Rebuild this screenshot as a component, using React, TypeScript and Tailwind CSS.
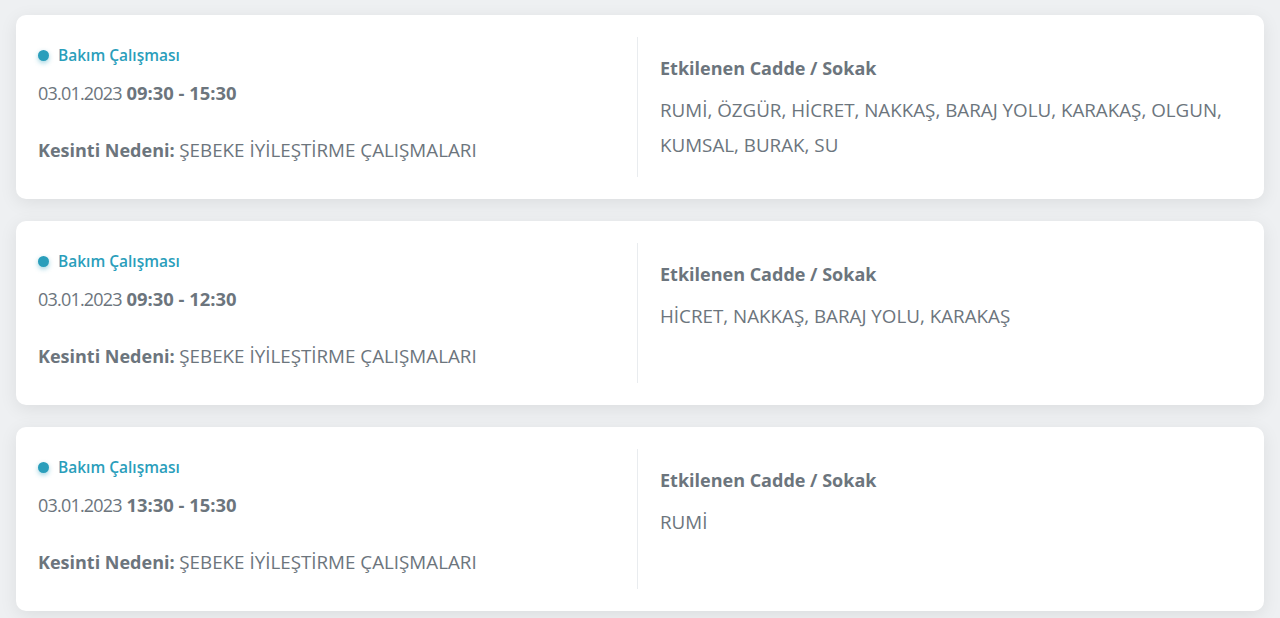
const items = [
  {
    time: "09:30 - 15:30",
    streets: "RUMİ, ÖZGÜR, HİCRET, NAKKAŞ, BARAJ YOLU, KARAKAŞ, OLGUN, KUMSAL, BURAK, SU",
  },
  { time: "09:30 - 12:30", streets: "HİCRET, NAKKAŞ, BARAJ YOLU, KARAKAŞ" },
  { time: "13:30 - 15:30", streets: "RUMİ" },
];

export default function App() {
  return (
    <div
      className="min-h-[618px] bg-[#eef0f2] px-4 pt-[15px] text-[#6c757d]"
      style={{ fontFamily: "'Open Sans', sans-serif" }}
    >
      <div className="flex flex-col gap-[22px]">
        {items.map((item, i) => (
          <div
            key={i}
            className="flex h-[184px] rounded-[10px] bg-white px-[22px] py-[22px] shadow-[0_4px_18px_rgba(0,0,0,0.08)]"
          >
            <div className="flex w-[600px] flex-col border-r border-[#e9ecef]">
              <div className="mt-[8px] flex items-center gap-[9px] text-[15.5px] font-semibold leading-5 text-[#2a9ebb]">
                <span className="h-[11px] w-[11px] rounded-full bg-[#2a9ebb] shadow-[0_2px_5px_rgba(42,158,187,0.45)]" />
                Bakım Çalışması
              </div>
              <div className="mt-[16px] text-[18px] leading-6">
                <span className="tracking-[-0.8px]">03.01.2023</span>{" "}
                <span className="text-[18.4px] font-bold">{item.time}</span>
              </div>
              <div className="mt-[33px] text-[18px] leading-6">
                <span className="font-bold">Kesinti Nedeni:</span>{" "}
                <span className="text-[18.8px]">ŞEBEKE İYİLEŞTİRME ÇALIŞMALARI</span>
              </div>
            </div>
            <div className="flex-1 pl-[22px] pt-[19px]">
              <div className="text-[18px] font-bold leading-6">Etkilenen Cadde / Sokak</div>
              <div className="mt-[13px] text-[18.8px] leading-[35px]">{item.streets}</div>
            </div>
          </div>
        ))}
      </div>
    </div>
  );
}
